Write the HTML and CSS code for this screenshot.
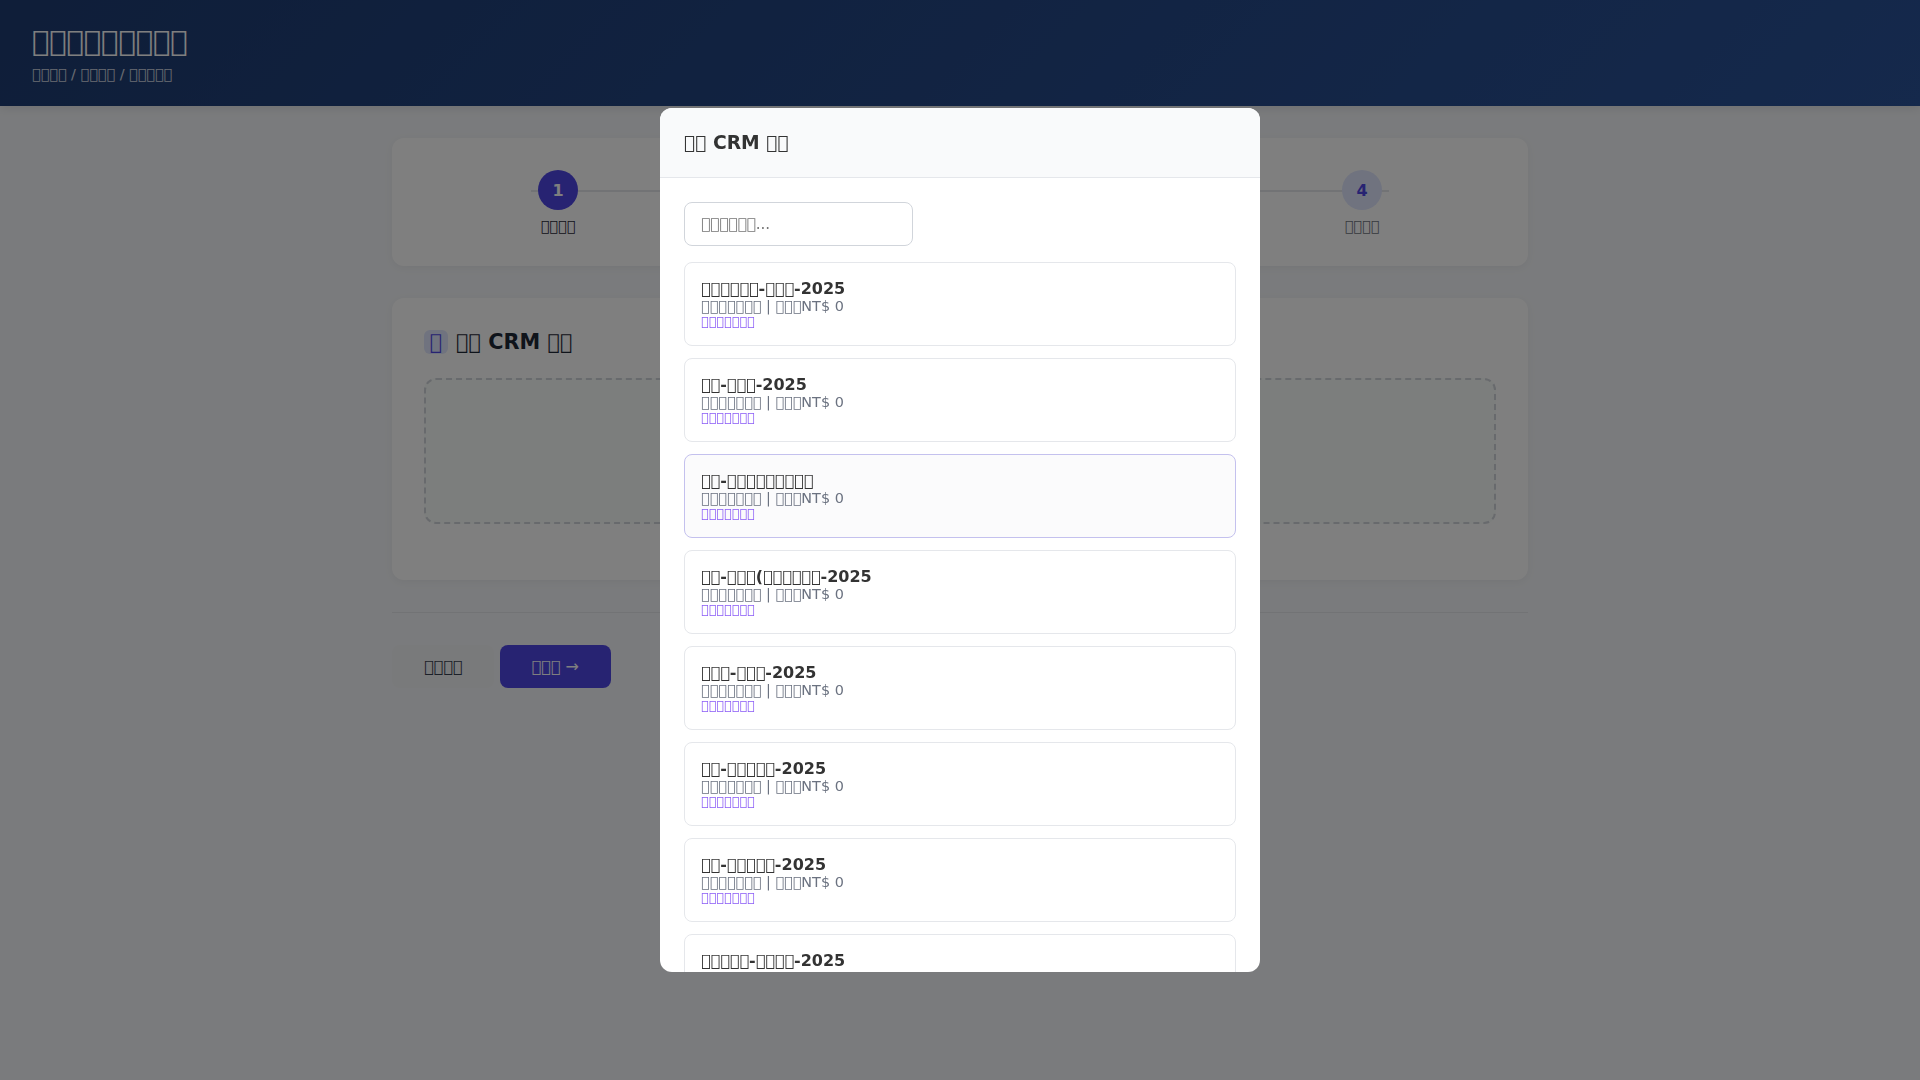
FILE: index.html
```html
<!DOCTYPE html>
<html lang="zh-Hant">
<head>
<meta charset="utf-8">
<title>CRM</title>
<link rel="stylesheet" href="styles.css">
</head>
<body>
<header class="header">
  <h1>&#xE83A;&#xE83A;&#xE83A;&#xE83A;&#xE83A;&#xE83A;&#xE83A;&#xE83A;&#xE83A;</h1>
  <div class="breadcrumb">&#xE83A;&#xE83A;&#xE83A;&#xE83A; / &#xE83A;&#xE83A;&#xE83A;&#xE83A; / &#xE83A;&#xE83A;&#xE83A;&#xE83A;&#xE83A;</div>
</header>
<main class="container">
  <section class="steps">
    <div class="step active"><div class="circle">1</div><div class="label">&#xE83A;&#xE83A;&#xE83A;&#xE83A;</div></div>
    <div class="step"><div class="circle">2</div><div class="label">&#xE83A;&#xE83A;&#xE83A;&#xE83A;</div></div>
    <div class="step"><div class="circle">3</div><div class="label">&#xE83A;&#xE83A;&#xE83A;&#xE83A;</div></div>
    <div class="step"><div class="circle">4</div><div class="label">&#xE83A;&#xE83A;&#xE83A;&#xE83A;</div></div>
  </section>
  <section class="card">
    <h2><span class="icon">&#xE83A;</span>&#xE83A;&#xE83A; CRM &#xE83A;&#xE83A;</h2>
    <div class="dropzone"></div>
  </section>
  <div class="actions">
    <button class="btn secondary">&#xE83A;&#xE83A;&#xE83A;&#xE83A;</button>
    <button class="btn primary">&#xE83A;&#xE83A;&#xE83A; →</button>
  </div>
</main>
<div class="overlay">
  <div class="modal">
    <div class="modal-header"><h3>&#xE83A;&#xE83A; CRM &#xE83A;&#xE83A;</h3></div>
    <div class="modal-body">
      <input class="search" type="text" placeholder="&#xE83A;&#xE83A;&#xE83A;&#xE83A;&#xE83A;&#xE83A;...">
      <div class="list">
        <div class="item"><div class="name">&#xE83A;&#xE83A;&#xE83A;&#xE83A;&#xE83A;&#xE83A;-&#xE83A;&#xE83A;&#xE83A;-2025</div><div class="meta">&#xE83A;&#xE83A;&#xE83A;&#xE83A;&#xE83A;&#xE83A;&#xE83A; | &#xE83A;&#xE83A;&#xE83A;NT$ 0</div><div class="tag">&#xE83A;&#xE83A;&#xE83A;&#xE83A;&#xE83A;&#xE83A;&#xE83A;</div></div>
        <div class="item"><div class="name">&#xE83A;&#xE83A;-&#xE83A;&#xE83A;&#xE83A;-2025</div><div class="meta">&#xE83A;&#xE83A;&#xE83A;&#xE83A;&#xE83A;&#xE83A;&#xE83A; | &#xE83A;&#xE83A;&#xE83A;NT$ 0</div><div class="tag">&#xE83A;&#xE83A;&#xE83A;&#xE83A;&#xE83A;&#xE83A;&#xE83A;</div></div>
        <div class="item hovered"><div class="name">&#xE83A;&#xE83A;-&#xE83A;&#xE83A;&#xE83A;&#xE83A;&#xE83A;&#xE83A;&#xE83A;&#xE83A;&#xE83A;</div><div class="meta">&#xE83A;&#xE83A;&#xE83A;&#xE83A;&#xE83A;&#xE83A;&#xE83A; | &#xE83A;&#xE83A;&#xE83A;NT$ 0</div><div class="tag">&#xE83A;&#xE83A;&#xE83A;&#xE83A;&#xE83A;&#xE83A;&#xE83A;</div></div>
        <div class="item"><div class="name">&#xE83A;&#xE83A;-&#xE83A;&#xE83A;&#xE83A;(&#xE83A;&#xE83A;&#xE83A;&#xE83A;&#xE83A;&#xE83A;-2025</div><div class="meta">&#xE83A;&#xE83A;&#xE83A;&#xE83A;&#xE83A;&#xE83A;&#xE83A; | &#xE83A;&#xE83A;&#xE83A;NT$ 0</div><div class="tag">&#xE83A;&#xE83A;&#xE83A;&#xE83A;&#xE83A;&#xE83A;&#xE83A;</div></div>
        <div class="item"><div class="name">&#xE83A;&#xE83A;&#xE83A;-&#xE83A;&#xE83A;&#xE83A;-2025</div><div class="meta">&#xE83A;&#xE83A;&#xE83A;&#xE83A;&#xE83A;&#xE83A;&#xE83A; | &#xE83A;&#xE83A;&#xE83A;NT$ 0</div><div class="tag">&#xE83A;&#xE83A;&#xE83A;&#xE83A;&#xE83A;&#xE83A;&#xE83A;</div></div>
        <div class="item"><div class="name">&#xE83A;&#xE83A;-&#xE83A;&#xE83A;&#xE83A;&#xE83A;&#xE83A;-2025</div><div class="meta">&#xE83A;&#xE83A;&#xE83A;&#xE83A;&#xE83A;&#xE83A;&#xE83A; | &#xE83A;&#xE83A;&#xE83A;NT$ 0</div><div class="tag">&#xE83A;&#xE83A;&#xE83A;&#xE83A;&#xE83A;&#xE83A;&#xE83A;</div></div>
        <div class="item"><div class="name">&#xE83A;&#xE83A;-&#xE83A;&#xE83A;&#xE83A;&#xE83A;&#xE83A;-2025</div><div class="meta">&#xE83A;&#xE83A;&#xE83A;&#xE83A;&#xE83A;&#xE83A;&#xE83A; | &#xE83A;&#xE83A;&#xE83A;NT$ 0</div><div class="tag">&#xE83A;&#xE83A;&#xE83A;&#xE83A;&#xE83A;&#xE83A;&#xE83A;</div></div>
        <div class="item"><div class="name">&#xE83A;&#xE83A;&#xE83A;&#xE83A;&#xE83A;-&#xE83A;&#xE83A;&#xE83A;&#xE83A;-2025</div></div>
      </div>
    </div>
  </div>
</div>
</body>
</html>
```
FILE: styles.css
```css
* { box-sizing: border-box; margin: 0; padding: 0; }
body {
  font-family: "DejaVu Sans", sans-serif;
  background: #f5f7fa;
  color: #333;
  min-height: 100vh;
}
.header {
  background: linear-gradient(135deg, #1e3c72 0%, #2a5298 100%);
  color: #fff;
  padding: 24px 32px;
  box-shadow: 0 2px 10px rgba(0, 0, 0, 0.1);
}
.header h1 { font-size: 28.8px; font-weight: 400; margin-bottom: 8px; }
.breadcrumb { font-size: 14.4px; opacity: 0.8; }
.container { max-width: 1200px; margin: 0 auto; padding: 32px; }
.steps, .card {
  background: #fff;
  border-radius: 12px;
  padding: 32px;
  margin-bottom: 32px;
  box-shadow: 0 2px 10px rgba(0, 0, 0, 0.05);
}
.steps { display: flex; position: relative; }
.steps::before {
  content: "";
  position: absolute;
  top: 52px;
  left: calc(32px + (100% - 64px) * 0.1);
  right: calc(32px + (100% - 64px) * 0.1);
  height: 2px;
  background: #e5e7eb;
}
.step { flex: 1; display: flex; flex-direction: column; align-items: center; position: relative; }
.circle {
  width: 40px;
  height: 40px;
  border-radius: 50%;
  background: #e0e7ff;
  color: #4f46e5;
  font-weight: 700;
  display: flex;
  align-items: center;
  justify-content: center;
  margin-bottom: 8px;
}
.label { font-size: 14.4px; color: #6b7280; }
.active .circle { background: #4f46e5; color: #fff; }
.active .label { color: #1f2937; }
.card h2 {
  display: flex;
  align-items: center;
  gap: 8px;
  font-size: 20.8px;
  color: #1f2937;
  margin-bottom: 24px;
}
.icon {
  width: 24px;
  height: 24px;
  border-radius: 6px;
  background: #e0e7ff;
  color: #4f46e5;
  display: flex;
  align-items: center;
  justify-content: center;
}
.dropzone {
  height: 146px;
  border: 2px dashed #d1d5db;
  border-radius: 12px;
  background: #f9fdfa;
  margin-bottom: 24px;
}
.actions { border-top: 1px solid #e5e7eb; padding-top: 32px; }
.btn {
  font: 16px "DejaVu Sans", sans-serif;
  padding: 12px 32px;
  border: 0;
  border-radius: 8px;
}
.secondary { background: #f3f4f6; color: #374151; }
.primary { background: #4f46e5; color: #fff; }
.overlay {
  position: fixed;
  inset: 0;
  background: rgba(0, 0, 0, 0.5);
  display: flex;
  align-items: center;
  justify-content: center;
}
.modal {
  width: 600px;
  height: 80vh;
  background: #fff;
  border-radius: 12px;
  overflow: hidden;
}
.modal-header {
  background: #f9fafb;
  border-bottom: 1px solid #e5e7eb;
  padding: 24px;
}
.modal-header h3 { font-size: 18.72px; }
.modal-body { padding: 24px; }
.search {
  display: block;
  font: 15.2px "DejaVu Sans", sans-serif;
  padding: 12px 16px;
  border: 1px solid #d1d5db;
  border-radius: 8px;
  margin-bottom: 16px;
}
.list { display: flex; flex-direction: column; gap: 12px; }
.item { border: 1px solid #e5e7eb; border-radius: 8px; padding: 16px; }
.hovered { border-color: #c4c1ee; background: #fbfbfc; }
.name { font-weight: 700; }
.meta { font-size: 14.4px; color: #6b7280; }
.tag { font-size: 12.8px; color: #8b5cf6; }
```
